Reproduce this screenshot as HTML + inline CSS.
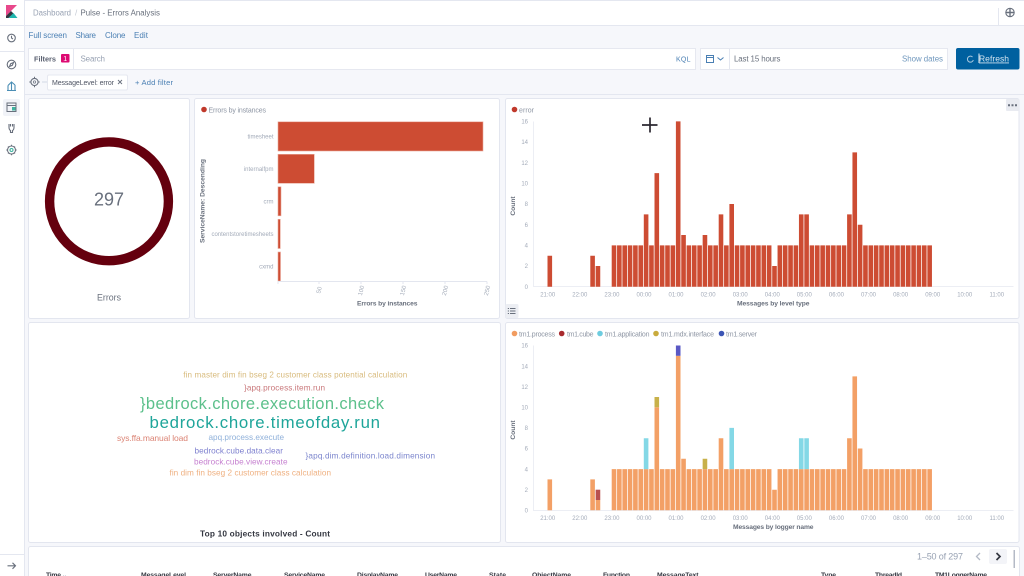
<!DOCTYPE html>
<html lang="en"><head><meta charset="utf-8"><title>Pulse - Errors Analysis</title>
<style>
html,body{margin:0;padding:0;width:1024px;height:576px;overflow:hidden;background:#f6f7fb}
svg{display:block;font-family:"Liberation Sans",sans-serif}
.p{fill:#fff;stroke:#e3e6ef;stroke-width:1}
.b{fill:none;stroke:#e4e7f0}
.l{fill:#4a7fb3;font-size:8px}
.t{fill:#a3abb9;font-size:6px}
.y{fill:#a3abb9;font-size:6px;text-anchor:end}
.x{fill:#a3abb9;font-size:6px;text-anchor:middle}
.a{fill:#69707d;font-size:6.7px;font-weight:bold}
.h{fill:#343741;font-size:6.8px;font-weight:bold}
.leg{fill:#8d95a3;font-size:7px}
.ic{fill:none;stroke:#69707d;stroke-width:1.1}
</style></head><body>
<svg width="1024" height="576" viewBox="0 0 1024 576" xmlns="http://www.w3.org/2000/svg">
<rect width="1024" height="576" fill="#f6f7fb"/>
<!-- header -->
<rect x="0" y="0" width="1024" height="25" fill="#fff"/>
<path class="b" d="M0 .5H1024M0 25.500H1024"/>
<rect x="0" y="0" width="24" height="576" fill="#fff"/>
<path class="b" d="M24.500 0V576M0 51.500H24M0 25.500H24M0 554.500H24M998.500 8V25"/>
<!-- logo -->
<path d="M6 5H17L6 16Z" fill="#e8488b"/><path d="M6 16L11 11L13.500 13.500L8.500 18H6Z" fill="#343741"/>
<path d="M8.500 18L13.500 13L17.500 18Z" fill="#1fb5ad"/>
<text x="33" y="15.500" font-size="7.800" fill="#98a2b3" textLength="38">Dashboard</text>
<text x="75" y="15.500" font-size="8" fill="#c2c8d2">/</text>
<text x="80.500" y="15.500" font-size="7.900" fill="#69707d" textLength="79.500">Pulse - Errors Analysis</text>
<g class="ic"><circle cx="1010" cy="12.500" r="4.200"/><path d="M1005.800 12.500H1014.200M1010 8.300V16.700" stroke-width="1.400"/></g>
<!-- sidebar icons -->
<g class="ic">
<circle cx="11.500" cy="38" r="3.800"/><path d="M11.500 35.800V38L13 39"/>
<circle cx="11.500" cy="64.500" r="4.300"/><path d="M9.500 66.500L10.700 63.700L13.500 62.500L12.300 65.300Z"/>
<path d="M7 90.500H16M8 90V85.500M11.500 90V82M15 90V85M8 85.500L11.500 82L15 85" stroke="#4b8eb5"/>
</g>
<rect x="3" y="99" width="17" height="17" rx="2" fill="#f1f3f8"/>
<rect x="7" y="103" width="9" height="8.500" fill="none" stroke="#69707d"/><path d="M7 105.500H16" stroke="#69707d"/><rect x="12" y="107" width="3.500" height="3.500" fill="#3fb3a0"/>
<path class="ic" d="M9 124V127Q9 130 10.500 130.500V132.500H12.500V130.500Q14 130 14 127V124M10.500 124V126.500M12.500 124V126.500"/>
<g class="ic"><circle cx="11.500" cy="150" r="4"/><circle cx="11.500" cy="150" r="1.500" stroke="#3fb3a0"/><path d="M11.500 144.800V146M11.500 154V155.200M6.300 150H7.500M15.500 150H16.700M8 146.500L8.800 147.300M14.200 152.700L15 153.500M15 146.500L14.200 147.300M8.800 152.700L8 153.500"/></g>
<path class="ic" d="M7.500 565.800H15.500M12.500 562.800L15.500 565.800L12.500 568.800"/>
<!-- nav links -->
<text class="l" x="28.500" y="38" textLength="38.500">Full screen</text>
<text class="l" x="75.500" y="38" textLength="20.500">Share</text>
<text class="l" x="105" y="38" textLength="20.500">Clone</text>
<text class="l" x="134" y="38" textLength="14">Edit</text>
<!-- filter bar -->
<rect x="28.500" y="48.500" width="667" height="21" fill="#fff" stroke="#e6e8f0"/>
<path class="b" d="M73.500 49V69"/>
<text x="34" y="61.500" font-size="7.400" font-weight="bold" fill="#5a6070" textLength="22">Filters</text>
<rect x="61" y="54" width="8.500" height="8.500" rx="1" fill="#dd0a73"/>
<text x="65.200" y="61.200" font-size="7" fill="#fff" text-anchor="middle">1</text>
<text x="80.500" y="61.500" font-size="8" fill="#98a2b3" textLength="24.500">Search</text>
<text x="676" y="61.500" font-size="7" fill="#4a7fb3" textLength="14.500">KQL</text>
<rect x="700.500" y="48.500" width="247" height="21" fill="#fff" stroke="#e6e8f0"/>
<path class="b" d="M729.500 49V69"/>
<rect x="706.500" y="55.500" width="7" height="7" fill="none" stroke="#4a7fb3"/><path d="M706.500 57.500H713.500" stroke="#4a7fb3"/>
<path d="M717.500 57.500L720.500 60L723.500 57.500" fill="none" stroke="#4a7fb3"/>
<text x="734" y="61.500" font-size="7.900" fill="#69707d" textLength="46.500">Last 15 hours</text>
<text x="902" y="61.500" font-size="7.900" fill="#6f97bd" textLength="41">Show dates</text>
<rect x="956" y="48" width="63.500" height="21.500" rx="2" fill="#00609f"/>
<path d="M972.500 57A3 3 0 1 0 973.300 60" fill="none" stroke="#a9c9df"/>
<text x="979" y="61.500" font-size="8.500" fill="#d6e6f1" textLength="30" text-decoration="underline">Refresh</text>
<rect x="978.500" y="53.500" width="1" height="9.500" fill="#e8f0f6"/>
<!-- filter row -->
<circle cx="34.500" cy="82" r="3.600" fill="none" stroke="#69707d" stroke-width="1.100"/><circle cx="34.500" cy="82" r="1.200" fill="none" stroke="#69707d" stroke-width=".7"/>
<path d="M34.500 76.800V78M34.500 86V87.200M29.300 82H30.500M38.500 82H39.700" stroke="#69707d"/>
<path d="M42 82H47" stroke="#d3dae6"/>
<rect x="47.500" y="75" width="80" height="15" rx="1.500" fill="#fff" stroke="#e6e8f0"/>
<text x="52" y="84.800" font-size="7" fill="#4f5564" textLength="62">MessageLevel: error</text>
<path d="M118 80L122 84M122 80L118 84" stroke="#69707d" stroke-width=".9"/>
<text x="135" y="85" font-size="7.600" fill="#4a7fb3" textLength="38">+ Add filter</text>
<path class="b" d="M25 94.500H1024" stroke="#e8eaf1"/>
<!-- panels -->
<rect class="p" x="28.500" y="98.500" width="161" height="220" rx="2"/>
<rect class="p" x="194.500" y="98.500" width="305" height="220" rx="2"/>
<rect class="p" x="505.500" y="98.500" width="513.500" height="220" rx="2"/>
<rect class="p" x="28.500" y="322.500" width="472" height="220" rx="2"/>
<rect class="p" x="505.500" y="322.500" width="513.500" height="220" rx="2"/>
<rect class="p" x="28.500" y="546.500" width="991" height="40" rx="2"/>
<!-- donut -->
<circle cx="109" cy="201.300" r="59.400" fill="none" stroke="#65000e" stroke-width="9.400"/>
<text x="109" y="205.500" font-size="18" fill="#69707d" text-anchor="middle">297</text>
<text x="109" y="300.500" font-size="8.800" fill="#69707d" text-anchor="middle">Errors</text>
<!-- horizontal bars -->
<circle cx="204" cy="109.500" r="2.800" fill="#c0392b"/>
<text class="leg" x="208.500" y="112.300" textLength="57.500">Errors by instances</text>
<g fill="#cd4c33" stroke="#eaa99b" stroke-width=".6">
<rect x="278" y="121.800" width="205" height="29.200"/>
<rect x="278" y="154.300" width="36.300" height="29"/>
<rect x="278" y="186.800" width="3" height="29"/>
<rect x="278" y="219.300" width="2.300" height="29.200"/>
<rect x="278" y="252" width="2.500" height="29"/>
</g>
<g class="y">
<text x="273.500" y="138.500">timesheet</text>
<text x="273.500" y="171">internalfpm</text>
<text x="273.500" y="203.500">crm</text>
<text x="273.500" y="236">contentstoretimesheets</text>
<text x="273.500" y="268.500">cxmd</text>
</g>
<text class="a" transform="translate(204.500 201) rotate(-90)" text-anchor="middle">ServiceName: Descending</text>
<path d="M278 281.500H487M278 281.500V284M319 281.500V284M361 281.500V284M403 281.500V284M445 281.500V284M487 281.500V284" stroke="#e3e6ef" fill="none"/>
<g class="t">
<text transform="translate(321 290.500) rotate(-75)" text-anchor="middle">50</text>
<text transform="translate(363 291) rotate(-75)" text-anchor="middle">100</text>
<text transform="translate(405 291) rotate(-75)" text-anchor="middle">150</text>
<text transform="translate(447 291) rotate(-75)" text-anchor="middle">200</text>
<text transform="translate(489 291) rotate(-75)" text-anchor="middle">250</text>
</g>
<text class="a" x="357" y="305.300" textLength="60.500">Errors by instances</text>
<!-- chart 1 -->
<circle cx="514.500" cy="109.500" r="2.800" fill="#c0392b"/>
<text class="leg" x="519" y="112.300" textLength="15">error</text>
<path d="M533.500 121.500V287M533 286.500H1013.500" stroke="#eceef4" fill="none"/>
<g class="y"><text x="528" y="288.900">0</text><text x="528" y="268.200">2</text><text x="528" y="247.600">4</text><text x="528" y="226.900">6</text><text x="528" y="206.200">8</text><text x="528" y="185.600">10</text><text x="528" y="164.900">12</text><text x="528" y="144.200">14</text><text x="528" y="123.600">16</text></g>
<text class="a" transform="translate(515 206) rotate(-90)" text-anchor="middle">Count</text>
<g transform="translate(611.700 286.700) scale(5.35 -10.33)" fill="#cd4c33">
<path d="M-12 0v3h.86v-3zM-4 0v3h.86v-3zM-3 0v2h.86v-2zM0 0v4h.86v-4h.14v4h.86v-4h.14v4h.86v-4h.14v4h.86v-4h.14v4h.86v-4h.14v4h.86v-4h.14v7h.86v-7h.14v4h.86v-4h.14v11h.86v-11h.14v4h.86v-4h.14v4h.86v-4h.14v4h.86v-4h.14v16h.86v-16h.14v5h.86v-5h.14v4h.86v-4h.14v4h.86v-4h.14v4h.86v-4h.14v5h.86v-5h.14v4h.86v-4h.14v4h.86v-4h.14v7h.86v-7h.14v4h.86v-4h.14v8h.86v-8h.14v4h.86v-4h.14v4h.86v-4h.14v4h.86v-4h.14v4h.86v-4h.14v4h.86v-4h.14v4h.86v-4h.14v4h.86v-4h.14v2h.86v-2h.14v4h.86v-4h.14v4h.86v-4h.14v4h.86v-4h.14v4h.86v-4h.14v7h.86v-7h.14v7h.86v-7h.14v4h.86v-4h.14v4h.86v-4h.14v4h.86v-4h.14v4h.86v-4h.14v4h.86v-4h.14v4h.86v-4h.14v4h.86v-4h.14v7h.86v-7h.14v13h.86v-13h.14v6h.86v-6h.14v4h.86v-4h.14v4h.86v-4h.14v4h.86v-4h.14v4h.86v-4h.14v4h.86v-4h.14v4h.86v-4h.14v4h.86v-4h.14v4h.86v-4h.14v4h.86v-4h.14v4h.86v-4h.14v4h.86v-4h.14v4h.86v-4h.14v4h.86v-4z"/>
</g>
<g class="x"><text x="547.700" y="296.500">21:00</text><text x="579.800" y="296.500">22:00</text><text x="611.900" y="296.500">23:00</text><text x="644" y="296.500">00:00</text><text x="676" y="296.500">01:00</text><text x="708.100" y="296.500">02:00</text><text x="740.200" y="296.500">03:00</text><text x="772.300" y="296.500">04:00</text><text x="804.300" y="296.500">05:00</text><text x="836.400" y="296.500">06:00</text><text x="868.500" y="296.500">07:00</text><text x="900.600" y="296.500">08:00</text><text x="932.700" y="296.500">09:00</text><text x="964.700" y="296.500">10:00</text><text x="996.800" y="296.500">11:00</text></g>
<text class="a" x="737" y="305.300" textLength="72.500">Messages by level type</text>
<path d="M650 117.500V132.500M642 125H657.500" stroke="#2b2730" stroke-width="1.700" fill="none"/>
<rect x="1006" y="99" width="13" height="12" rx="1" fill="#e9ebf1"/>
<path d="M1008 105.300H1017" stroke="#69707d" stroke-width="2" stroke-dasharray="2 1.500"/>
<rect x="505.500" y="304" width="13" height="14" rx="1.500" fill="#eceef3"/>
<path d="M510 308.500H515.500M510 311H515.500M510 313.500H515.500M507.800 308.500H509M507.800 311H509M507.800 313.500H509" stroke="#69707d"/>
<!-- word cloud -->
<g>
<text x="183.300" y="377.700" font-size="8.100" fill="#d8bb7d" textLength="224">fin master dim fin bseg 2 customer class potential calculation</text>
<text x="244" y="390.700" font-size="8.200" fill="#c9787b" textLength="81">}apq.process.item.run</text>
<text x="140" y="409" font-size="16.500" fill="#5cc08b" textLength="244">}bedrock.chore.execution.check</text>
<text x="149.500" y="428" font-size="16.800" fill="#1ea59a" textLength="230.500">bedrock.chore.timeofday.run</text>
<text x="117" y="440.800" font-size="8.500" fill="#db8374" textLength="71">sys.ffa.manual load</text>
<text x="208.500" y="439.800" font-size="8.200" fill="#90b1da" textLength="75.500">apq.process.execute</text>
<text x="194.500" y="453.300" font-size="8.200" fill="#7e80cf" textLength="88.500">bedrock.cube.data.clear</text>
<text x="305.500" y="458.300" font-size="8.200" fill="#7b85cd" textLength="129.500">}apq.dim.definition.load.dimension</text>
<text x="194" y="464.700" font-size="8.200" fill="#c681d0" textLength="93.500">bedrock.cube.view.create</text>
<text x="169.500" y="475.700" font-size="8.200" fill="#efb182" textLength="161.500">fin dim fin bseg 2 customer class calculation</text>
</g>
<text x="200" y="536.500" font-size="8.300" font-weight="bold" fill="#343741" textLength="130">Top 10 objects involved - Count</text>
<!-- chart 2 -->
<g>
<circle cx="514.500" cy="333.500" r="2.800" fill="#f19c60"/><text class="leg" x="519" y="336.300" textLength="36">tm1.process</text>
<circle cx="561.700" cy="333.500" r="2.800" fill="#a82a2e"/><text class="leg" x="567" y="336.300" textLength="26.500">tm1.cube</text>
<circle cx="600" cy="333.500" r="2.800" fill="#6dccdf"/><text class="leg" x="605" y="336.300" textLength="44.500">tm1.application</text>
<circle cx="656" cy="333.500" r="2.800" fill="#c9ab3d"/><text class="leg" x="661" y="336.300" textLength="53">tm1.mdx.interface</text>
<circle cx="721.500" cy="333.500" r="2.800" fill="#3c55b5"/><text class="leg" x="726" y="336.300" textLength="31">tm1.server</text>
</g>
<path d="M533.500 345.500V511M533 510.500H1013.500" stroke="#eceef4" fill="none"/>
<g class="y"><text x="528" y="512.500">0</text><text x="528" y="491.900">2</text><text x="528" y="471.300">4</text><text x="528" y="450.700">6</text><text x="528" y="430.100">8</text><text x="528" y="409.500">10</text><text x="528" y="388.900">12</text><text x="528" y="368.300">14</text><text x="528" y="347.700">16</text></g>
<text class="a" transform="translate(515 430) rotate(-90)" text-anchor="middle">Count</text>
<g transform="translate(611.700 510.300) scale(5.35 -10.3)">
<path fill="#f3a066" d="M-12 0v3h.86v-3zM-4 0v3h.86v-3zM-3 0v1h.86v-1zM0 0v4h.86v-4h.14v4h.86v-4h.14v4h.86v-4h.14v4h.86v-4h.14v4h.86v-4h.14v4h.86v-4h.14v4h.86v-4h.14v4h.86v-4h.14v10h.86v-10h.14v4h.86v-4h.14v4h.86v-4h.14v4h.86v-4h.14v15h.86v-15h.14v5h.86v-5h.14v4h.86v-4h.14v4h.86v-4h.14v4h.86v-4h.14v4h.86v-4h.14v4h.86v-4h.14v4h.86v-4h.14v7h.86v-7h.14v4h.86v-4h.14v4h.86v-4h.14v4h.86v-4h.14v4h.86v-4h.14v4h.86v-4h.14v4h.86v-4h.14v4h.86v-4h.14v4h.86v-4h.14v4h.86v-4h.14v2h.86v-2h.14v4h.86v-4h.14v4h.86v-4h.14v4h.86v-4h.14v4h.86v-4h.14v4h.86v-4h.14v4h.86v-4h.14v4h.86v-4h.14v4h.86v-4h.14v4h.86v-4h.14v4h.86v-4h.14v4h.86v-4h.14v4h.86v-4h.14v4h.86v-4h.14v7h.86v-7h.14v13h.86v-13h.14v6h.86v-6h.14v4h.86v-4h.14v4h.86v-4h.14v4h.86v-4h.14v4h.86v-4h.14v4h.86v-4h.14v4h.86v-4h.14v4h.86v-4h.14v4h.86v-4h.14v4h.86v-4h.14v4h.86v-4h.14v4h.86v-4h.14v4h.86v-4h.14v4h.86v-4z"/>
<path fill="#84d8e6" d="M6 4v3h.86v-3zM22 4v4h.86v-4zM35 4v3h.86v-3zM36 4v3h.86v-3z"/>
<path fill="#c8b14a" d="M8 10v1h.86v-1zM17 4v1h.86v-1z"/>
<path fill="#b9504f" d="M-3 1v1h.86v-1z"/>
<path fill="#5a58c4" d="M12 15v1h.86v-1z"/>
</g>
<g class="x"><text x="547.700" y="520">21:00</text><text x="579.800" y="520">22:00</text><text x="611.900" y="520">23:00</text><text x="644" y="520">00:00</text><text x="676" y="520">01:00</text><text x="708.100" y="520">02:00</text><text x="740.200" y="520">03:00</text><text x="772.300" y="520">04:00</text><text x="804.300" y="520">05:00</text><text x="836.400" y="520">06:00</text><text x="868.500" y="520">07:00</text><text x="900.600" y="520">08:00</text><text x="932.700" y="520">09:00</text><text x="964.700" y="520">10:00</text><text x="996.800" y="520">11:00</text></g>
<text class="a" x="733" y="528.800" textLength="80.500">Messages by logger name</text>
<!-- table -->
<text x="917" y="559.500" font-size="9" fill="#98a2b3" textLength="46">1–50 of 297</text>
<path d="M980 553L976.500 556.500L980 560" fill="none" stroke="#b4bac6" stroke-width="1.300"/>
<rect x="989" y="549" width="18" height="15" rx="2" fill="#f3f4f8"/>
<path d="M996.500 553L1000 556.500L996.500 560" fill="none" stroke="#343741" stroke-width="1.700"/>
<rect x="1013.500" y="550" width="1.500" height="18" fill="#b4bac6"/>
<g class="h">
<text x="46" y="577" textLength="15">Time</text>
<text x="62" y="577" font-size="6" fill="#98a2b3">⌄</text>
<text x="141" y="577" textLength="45">MessageLevel</text>
<text x="213" y="577" textLength="38.500">ServerName</text>
<text x="284" y="577" textLength="41">ServiceName</text>
<text x="357" y="577" textLength="41">DisplayName</text>
<text x="425" y="577" textLength="32">UserName</text>
<text x="489" y="577" textLength="17">State</text>
<text x="532" y="577" textLength="39">ObjectName</text>
<text x="603" y="577" textLength="27">Function</text>
<text x="657" y="577" textLength="41.500">MessageText</text>
<text x="821" y="577" textLength="15">Type</text>
<text x="875" y="577" textLength="27">ThreadId</text>
<text x="935" y="577" textLength="52">TM1LoggerName</text>
</g>
</svg>
</body></html>
